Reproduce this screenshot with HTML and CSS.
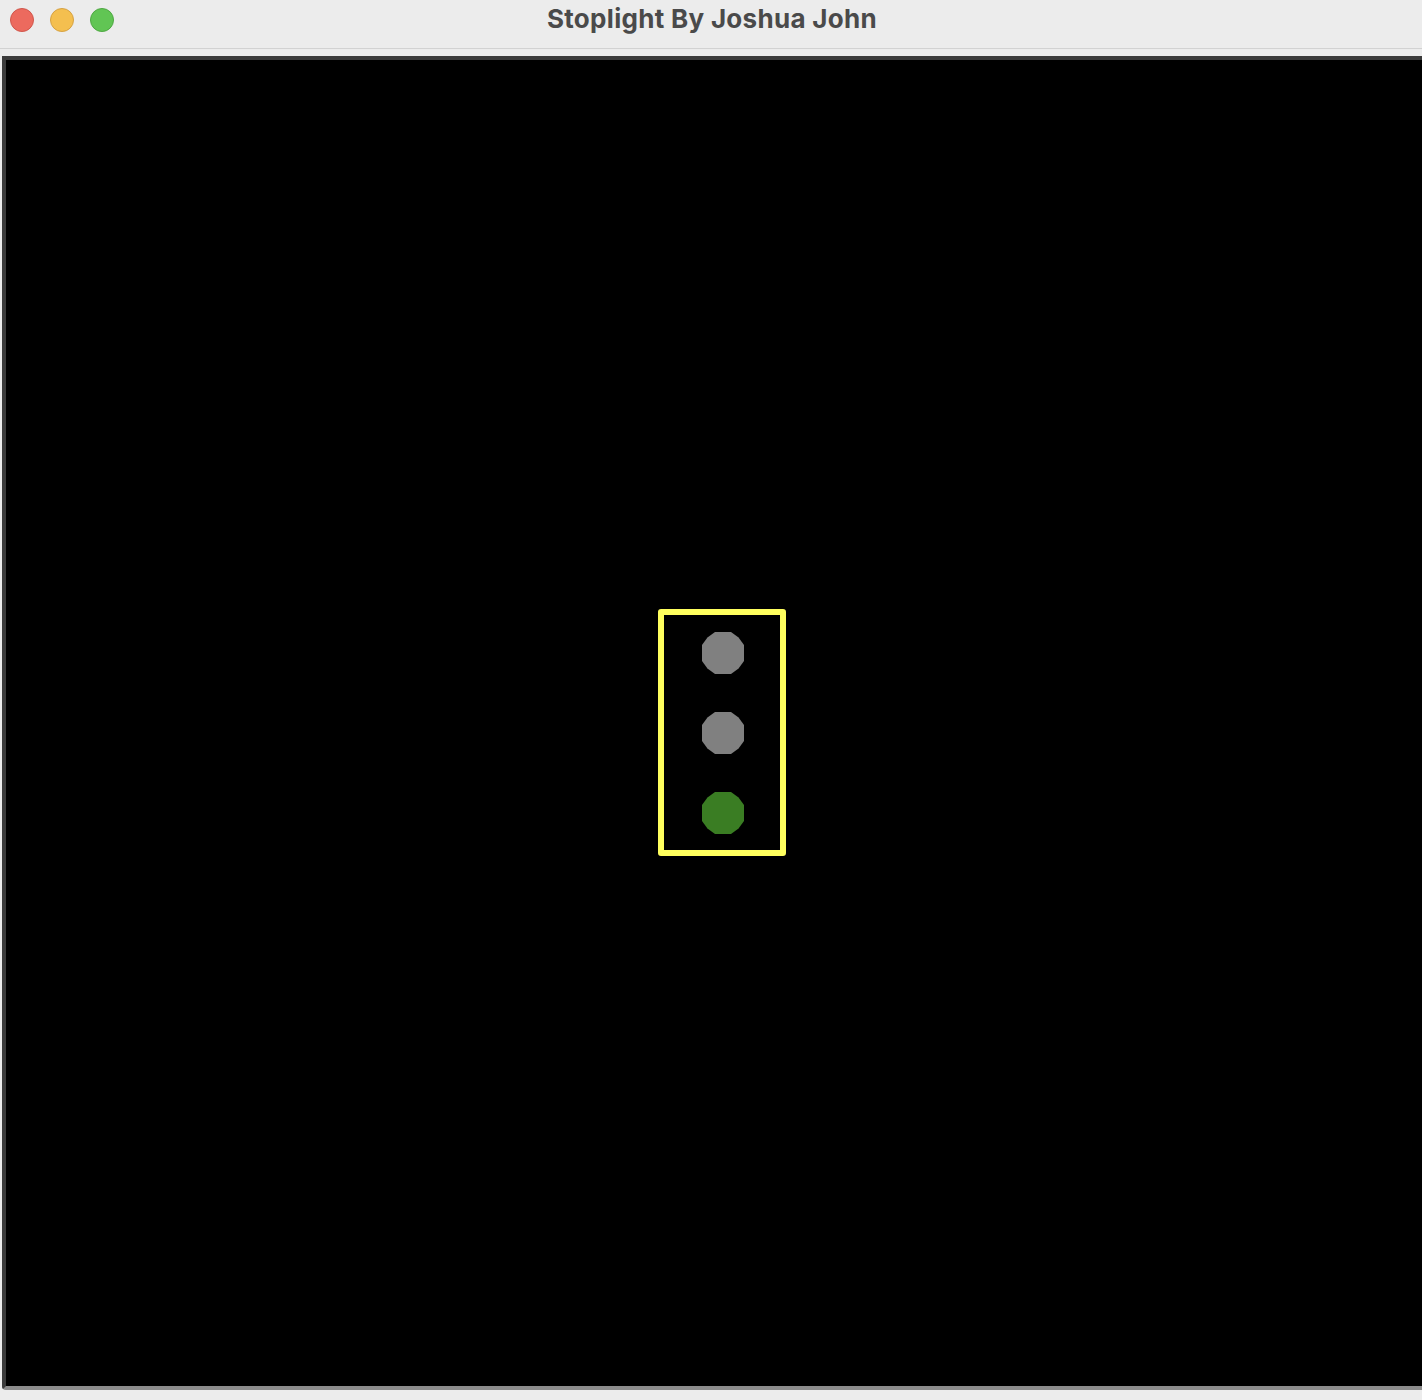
FILE: index.html
```html
<!DOCTYPE html>
<html lang="en">
<head>
<meta charset="utf-8">
<title>Stoplight By Joshua John</title>
<link rel="stylesheet" href="styles.css">
</head>
<body>
<div class="window">
  <header class="titlebar">
    <div class="controls">
      <span class="btn btn-close"></span>
      <span class="btn btn-min"></span>
      <span class="btn btn-max"></span>
    </div>
    <div class="title">Stoplight By Joshua John</div>
  </header>
  <main class="frame">
    <div class="canvas">
      <div class="stoplight">
        <span class="lamp lamp-off"></span>
        <span class="lamp lamp-off"></span>
        <span class="lamp lamp-green"></span>
      </div>
    </div>
  </main>
</div>
</body>
</html>
```

FILE: styles.css
```css
html, body {
  margin: 0;
  padding: 0;
}
body {
  width: 1422px;
  height: 1400px;
  overflow: hidden;
  background: #ececec;
  font-family: "Inter", "Liberation Sans", Arial, sans-serif;
}
.window {
  display: flex;
  flex-direction: column;
  height: 1400px;
}
.titlebar {
  position: relative;
  height: 48px;
  border-bottom: 1px solid #d2d2d2;
  background: #ececec;
  display: flex;
  align-items: center;
  justify-content: center;
  flex: none;
}
.controls {
  position: absolute;
  left: 10px;
  top: 8px;
  display: flex;
  gap: 16px;
}
.btn {
  width: 22px;
  height: 22px;
  border-radius: 50%;
  border: 1px solid rgba(0,0,0,0.12);
  display: block;
}
.btn-close { background: #ec6a5e; border-color: #d0574c; }
.btn-min { background: #f4bf4f; border-color: #d6a243; }
.btn-max { background: #61c554; border-color: #4fa843; }
.title {
  font-size: 26px;
  font-weight: 700;
  color: #4a4a4a;
  letter-spacing: 0.3px;
  margin-top: -12px;
  padding-left: 2px;
}
.frame {
  margin-top: 7px;
  margin-left: 2px;
  border-top: 4px solid #3b3b3b;
  border-left: 4px solid #3b3b3b;
  border-bottom: 4px solid #8c8c8c;
  border-bottom-left-radius: 4px;
  background: #000;
  height: 1326px;
  flex: none;
}
.canvas {
  padding-top: 549px;
  padding-left: 652px;
}
.stoplight {
  width: 116px;
  height: 235px;
  border: 6px solid #ffff5e;
  border-radius: 3px;
  box-sizing: content-box;
  display: flex;
  flex-direction: column;
  align-items: flex-start;
  padding: 0;
}
.lamp {
  display: block;
  width: 42px;
  height: 42px;
  margin-left: 38px;
  margin-top: 17px;
  clip-path: polygon(31% 0, 69% 0, 87% 13%, 100% 31%, 100% 69%, 87% 87%, 69% 100%, 31% 100%, 13% 87%, 0 69%, 0 31%, 13% 13%);
}
.lamp + .lamp {
  margin-top: 38px;
}
.lamp-off { background: #808080; }
.lamp-green { background: #3a7d23; }
```
